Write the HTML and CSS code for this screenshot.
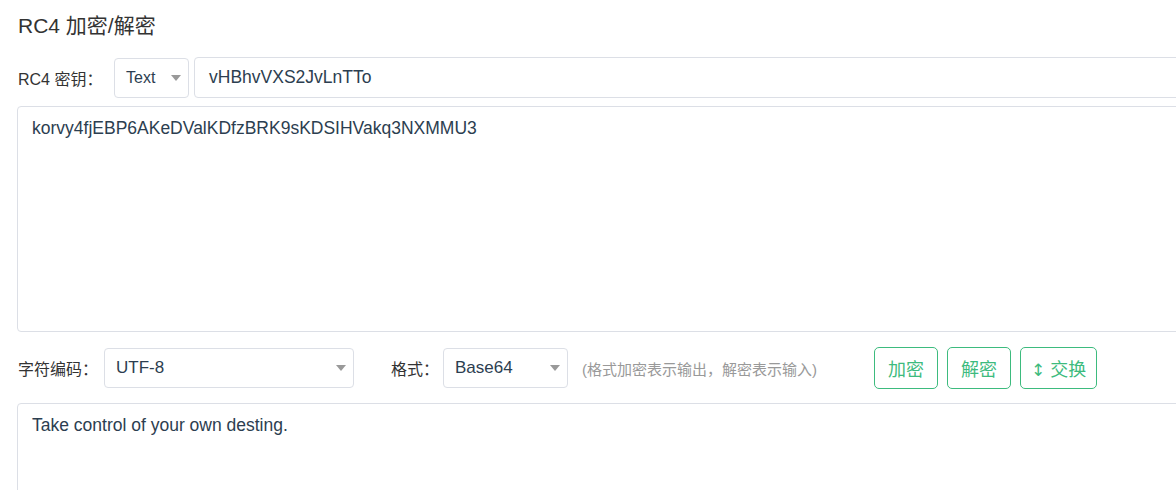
FILE: index.html
```html
<!DOCTYPE html>
<html lang="zh-CN">
<head>
    <meta charset="UTF-8">
    <meta name="viewport" content="width=device-width, initial-scale=1.0">
    <title>RC4 加密/解密</title>
    <link rel="stylesheet" href="styles.css">
</head>
<body>
    <div class="container">
        <h1 class="title">RC4 加密/解密</h1>

        <div class="row key-row">
            <label class="label key-label">RC4 密钥：</label>
            <div class="select key-type">
                <span class="select-value">Text</span>
                <span class="caret"></span>
            </div>
            <div class="input key-input">vHBhvVXS2JvLnTTo</div>
        </div>

        <div class="textarea cipher-box">korvy4fjEBP6AKeDValKDfzBRK9sKDSIHVakq3NXMMU3</div>

        <div class="row option-row">
            <label class="label">字符编码：</label>
            <div class="select charset">
                <span class="select-value">UTF-8</span>
                <span class="caret"></span>
            </div>
            <label class="label format-label">格式：</label>
            <div class="select format">
                <span class="select-value">Base64</span>
                <span class="caret"></span>
            </div>
            <span class="hint">(格式加密表示输出，解密表示输入)</span>
            <div class="buttons">
                <button class="btn">加密</button>
                <button class="btn">解密</button>
                <button class="btn swap"><span class="arrow">↕</span> 交换</button>
            </div>
        </div>

        <div class="textarea plain-box">Take control of your own desting.</div>
    </div>
</body>
</html>
```

FILE: styles.css
```css
html, body {
    margin: 0;
    padding: 0;
    overflow: hidden;
    background: #fff;
}

body {
    font-family: "Liberation Sans", Arial, "Noto Sans CJK SC", sans-serif;
    color: #2c3e50;
    font-size: 16px;
}

.container {
    width: 1240px;
    padding: 11px 0 0 17px;
}

.title {
    margin: 0 0 0 1px;
    font-size: 21px;
    font-weight: normal;
    line-height: 30px;
    color: #333;
}

.row {
    display: flex;
    align-items: center;
}

.key-row {
    margin-top: 16px;
}

.label {
    margin-left: 1px;
    white-space: nowrap;
    color: #333;
}

.key-label {
    width: 96px;
}

.select,
.input,
.textarea {
    border: 1px solid #dcdfe6;
    border-radius: 4px;
    box-sizing: border-box;
    background: #fff;
}

.select {
    height: 40px;
    display: flex;
    align-items: center;
    justify-content: space-between;
    padding: 0 7px 0 11px;
    font-size: 17px;
}

.caret {
    width: 0;
    height: 0;
    border-left: 5px solid transparent;
    border-right: 5px solid transparent;
    border-top: 6px solid #999;
}

.key-type {
    width: 75px;
    font-size: 16px;
}

.input {
    flex: 1;
    height: 41px;
    margin-left: 5px;
    padding: 0 14px;
    line-height: 39px;
    font-size: 17.5px;
}

.textarea {
    padding: 9px 14px;
    line-height: 24px;
    font-size: 17.5px;
}

.cipher-box {
    margin-top: 8px;
    height: 226px;
}

.option-row {
    margin-top: 15px;
}

.charset {
    width: 250px;
    margin-left: 6px;
}

.format-label {
    margin-left: 37px;
}

.format {
    width: 125px;
    margin-left: 4px;
}

.hint {
    margin-left: 14px;
    font-size: 15px;
    color: #999;
    white-space: nowrap;
}

.buttons {
    display: flex;
    gap: 9px;
    margin-left: 57px;
}

.btn {
    height: 42px;
    padding: 0 13px;
    border: 1px solid #3dbb7e;
    border-radius: 5px;
    background: #fff;
    color: #3dbb7e;
    font-family: "Liberation Sans", Arial, "Noto Sans CJK SC", sans-serif;
    font-size: 18px;
    cursor: pointer;
}

.swap {
    padding: 0 10px;
}

.arrow {
    font-family: "DejaVu Sans", sans-serif;
    font-size: 17px;
}

.plain-box {
    margin-top: 14px;
    height: 120px;
}
```
